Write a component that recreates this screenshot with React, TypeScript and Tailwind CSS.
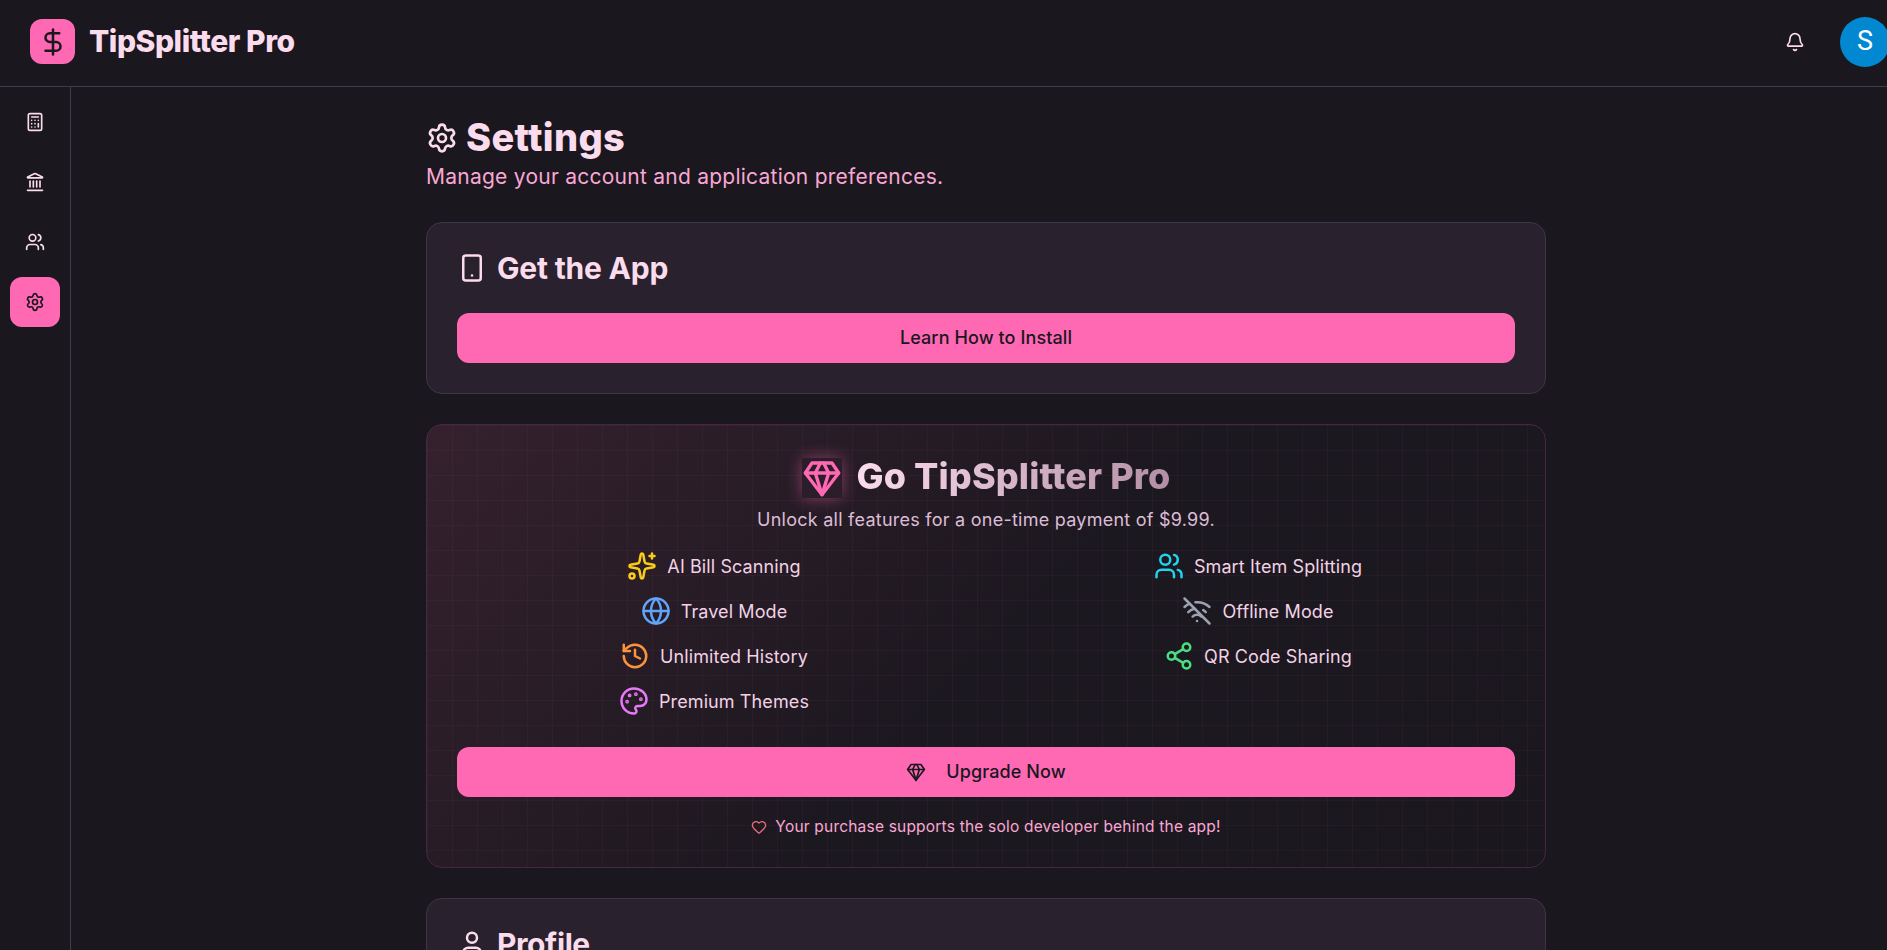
import {
  Bell,
  Calculator,
  DollarSign,
  Globe,
  Heart,
  History,
  Landmark,
  Palette,
  Settings,
  Share2,
  Smartphone,
  Sparkles,
  User,
  Users,
  WifiOff,
} from "lucide-react"

const features = [
  { label: "AI Bill Scanning", icon: Sparkles, color: "text-[#facc15]" },
  { label: "Smart Item Splitting", icon: Users, color: "text-[#22d3ee]" },
  { label: "Travel Mode", icon: Globe, color: "text-[#60a5fa]" },
  { label: "Offline Mode", icon: WifiOff, color: "text-[#9ca3af]" },
  { label: "Unlimited History", icon: History, color: "text-[#fb923c]" },
  { label: "QR Code Sharing", icon: Share2, color: "text-[#4ade80]" },
  { label: "Premium Themes", icon: Palette, color: "text-[#e879f9]" },
]

// the straight-edged gem from the reference
function GemIcon({ className }: { className?: string }) {
  return (
    <svg viewBox="0 0 24 24" fill="none" stroke="currentColor" strokeWidth="2" strokeLinecap="round" strokeLinejoin="round" className={className}>
      <path d="M6 3h12l4 6-10 13L2 9Z" />
      <path d="M11 3 8 9l4 13 4-13-3-6" />
      <path d="M2 9h20" />
    </svg>
  )
}

export default function App() {
  return (
    <div className="h-[950px] w-[1887px] overflow-hidden bg-[#1a171e]">
      <div className="flex h-full w-[1901px] flex-col font-[family-name:Inter,sans-serif] text-[#fbdcec]">
        {/* Header */}
        <header className="flex h-[87px] shrink-0 items-center justify-between border-b border-[#433a4a] pb-[3px] pl-[30px] pr-[11px]">
          <div className="flex items-center gap-[14px]">
            <div className="flex h-[45px] w-[45px] items-center justify-center rounded-[12px] bg-[#ff69b4] text-[#1a171e]">
              <DollarSign className="h-[30px] w-[30px]" />
            </div>
            <span className="text-[30px] font-extrabold tracking-[-0.45px]">TipSplitter Pro</span>
          </div>
          <div className="flex items-center gap-[35px]">
            <Bell className="h-5 w-5" />
            <div className="flex h-[50px] w-[50px] items-center justify-center rounded-full bg-[#0288d1] font-[family-name:Roboto,sans-serif] text-[27px] text-white">
              S
            </div>
          </div>
        </header>

        <div className="flex min-h-0 flex-1">
          {/* Sidebar */}
          <aside className="flex w-[71px] shrink-0 flex-col items-center gap-[10px] border-r border-[#433a4a] pr-px pt-[10px]">
            <div className="flex h-[50px] w-[50px] items-center justify-center">
              <Calculator className="h-5 w-5" />
            </div>
            <div className="flex h-[50px] w-[50px] items-center justify-center">
              <Landmark className="h-5 w-5" />
            </div>
            <div className="flex h-[50px] w-[50px] items-center justify-center">
              <Users className="h-5 w-5" />
            </div>
            <div className="flex h-[50px] w-[50px] items-center justify-center rounded-[12px] bg-[#ff69b4] text-[#1a171e]">
              <Settings className="h-5 w-5" />
            </div>
          </aside>

          {/* Main */}
          <main className="min-w-0 flex-1">
            <div className="mx-auto w-[1120px] pt-[26px]">
              <div className="flex h-[49px] items-center gap-[8px]">
                <Settings className="h-8 w-8" />
                <h1 className="text-[38px] font-extrabold tracking-[0.35px]">Settings</h1>
              </div>
              <p className="h-[30px] text-[21px] leading-[30px] tracking-[0.25px] text-[#f9a8d4]">
                Manage your account and application preferences.
              </p>

              {/* Get the App */}
              <section className="mt-[30px] rounded-[16px] border border-[#3d3545] bg-[#29222e] p-[30px]">
                <div className="mb-[30px] flex h-[30px] items-center gap-[10px]">
                  <Smartphone className="h-[30px] w-[30px]" />
                  <h2 className="text-[30px] font-bold tracking-[-0.2px]">Get the App</h2>
                </div>
                <button className="flex h-[50px] w-full items-center justify-center rounded-[12px] bg-[#ff69b4] pb-px text-[18px] font-medium tracking-[0.1px] text-[#1a171e]">
                  Learn How to Install
                </button>
              </section>

              {/* Go Pro */}
              <section className="relative mt-[30px] overflow-hidden rounded-[16px] border border-[#46283c] bg-[#1a171e] bg-[linear-gradient(135deg,#35212e_0%,#1c1820_50%,#1a171e_100%)] px-[30px] pt-[30px]">
                <div className="pointer-events-none absolute inset-0 bg-[linear-gradient(rgba(255,105,180,0.045)_1px,transparent_1px),linear-gradient(90deg,rgba(255,105,180,0.045)_1px,transparent_1px)] bg-[size:25px_25px]" />
                <div className="relative">
                  <div className="flex h-[46px] items-center justify-center gap-[15px]">
                    <div className="flex h-10 w-10 items-center justify-center bg-[#2b1e2a] text-[#ff69b4] shadow-[0_0_16px_rgba(255,105,180,0.45)]">
                      <GemIcon className="h-10 w-10" />
                    </div>
                    <h2 className="-translate-y-[2px] bg-[linear-gradient(90deg,#fbdcec,#b38fa5)] bg-clip-text text-[36px] font-extrabold tracking-[0.1px] text-transparent">
                      Go TipSplitter Pro
                    </h2>
                  </div>
                  <p className="mt-[5px] h-[27px] text-center text-[18px] leading-[27px] tracking-[0.25px] text-[#dcbdd6]">
                    Unlock all features for a one-time payment of $9.99.
                  </p>
                  <div className="mt-[18px] grid grid-cols-2 gap-x-[30px] gap-y-[15px]">
                    {features.map(({ label, icon: Icon, color }) => (
                      <div key={label} className="flex h-[30px] items-center justify-center gap-[10px] text-[18px] tracking-[0.1px] text-[#f3d2e6]">
                        <Icon className={`h-[30px] w-[30px] ${color}`} />
                        <span>{label}</span>
                      </div>
                    ))}
                  </div>
                  <button className="mt-[31px] flex h-[50px] w-full items-center justify-center gap-[20px] rounded-[12px] bg-[#ff69b4] pb-px text-[18px] font-medium tracking-[0.1px] text-[#1a171e]">
                    <GemIcon className="h-5 w-5" />
                    Upgrade Now
                  </button>
                  <p className="mb-[30px] mt-[20px] flex h-[20px] items-center justify-center gap-[8px] text-[15.5px] tracking-[0.2px] text-[#f9a8d4]">
                    <Heart className="h-4 w-4 text-[#ef6a7a]" />
                    Your purchase supports the solo developer behind the app!
                  </p>
                </div>
              </section>

              {/* Profile */}
              <section className="mt-[30px] rounded-[16px] border border-[#3d3545] bg-[#29222e] p-[30px]">
                <div className="flex h-[30px] items-center gap-[10px]">
                  <User className="h-[30px] w-[30px]" />
                  <h2 className="text-[30px] font-bold tracking-[-0.4px]">Profile</h2>
                </div>
              </section>
            </div>
          </main>
        </div>
      </div>
    </div>
  )
}
